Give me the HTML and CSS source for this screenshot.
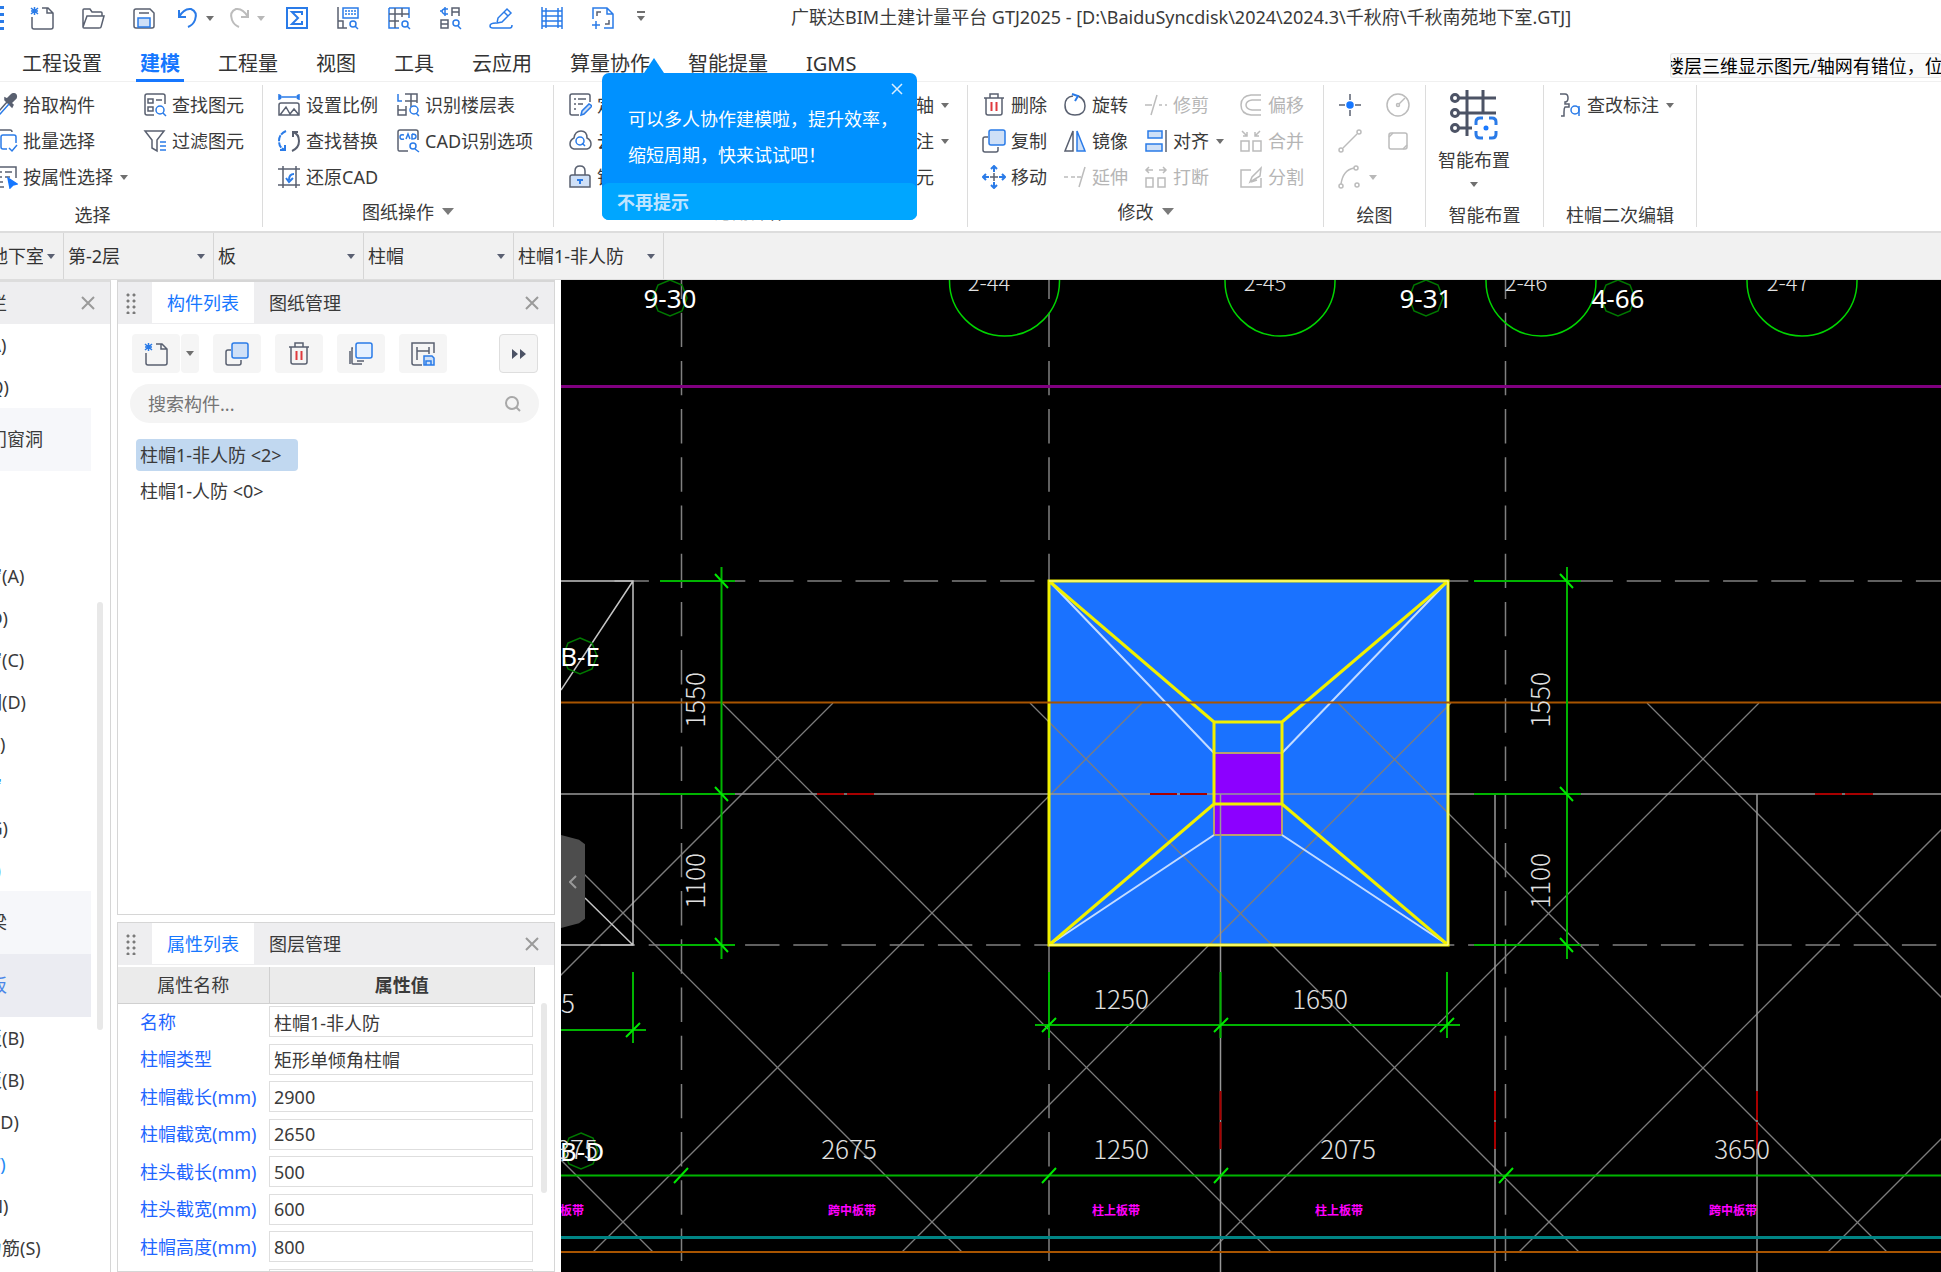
FILE: index.html
```html
<!DOCTYPE html>
<html lang="zh-CN">
<head>
    <meta charset="UTF-8">
    <meta name="viewport" content="width=device-width, initial-scale=1.0">
    <title>广联达BIM土建计量平台 GTJ2025</title>
    <link rel="stylesheet" href="styles.css">
</head>
<body>
    <header class="titlebar">
        <div class="quick-bar">
            <span class="quick-grip"></span>
            <button class="quick" aria-label="新建"><svg class="icon"><path d="M12 2h6l5 5v14a2 2 0 0 1-2 2H4a2 2 0 0 1-2-2V11M17 2v5h6"/><path class="b" d="M1 2l7 6M8 2L1 8M4.500 1v8M1 5h7"/></svg></button>
            <button class="quick" aria-label="打开"><svg class="icon"><path d="M2 21V4q0-1 1-1h6l2 3h9q1 0 1 1v3M2 21L6 10h17l-3 11q0 1-2 1H3q-1 0-1-1z"/></svg></button>
            <button class="quick" aria-label="保存"><svg class="icon"><path d="M4 3h14l4 4v13q0 2-2 2H4q-2 0-2-2V5q0-2 2-2zM7 7h10"/><path class="b light" d="M6 21v-9h12v9z"/></svg></button>
            <button class="quick" aria-label="撤销"><svg class="icon"><path class="b thick" d="M3 4v7h7M3 11Q8 2 15 3q7 3 4 11-2 5-7 7"/></svg><i class="caret"></i></button>
            <button class="quick off" aria-label="恢复"><svg class="icon"><path class="thick" d="M21 4v7h-7M21 11Q16 2 9 3 2 6 5 14q2 5 7 7"/></svg><i class="caret"></i></button>
            <button class="quick" aria-label="汇总"><svg class="icon"><path class="b thick" d="M2 2h20v20H2zM17 9V6H7l6 6-6 6h10v-3"/></svg></button>
            <button class="quick" aria-label="查看工程量"><svg class="icon"><path d="M2 1v21h9M2 15h5v7"/><path class="b" d="M7 2h15v10H7z"/><path class="b" stroke-dasharray="2 1" d="M9 5h11M9 8h11"/><circle class="b" cx="17" cy="18" r="3"/><path class="b" d="M19 20l3 3"/></svg></button>
            <button class="quick" aria-label="查看报表"><svg class="icon"><path class="b" d="M2 2h20v10M2 2v20h10"/><path d="M2 8h20M2 15h10M8 2v20M15 2v9"/><circle class="b" cx="18" cy="18" r="3"/><path class="b" d="M20 20l3 3"/></svg></button>
            <button class="quick" aria-label="查看构件"><svg class="icon"><path d="M14 10V2h7v8M14 6h7M3 14h7v8H3zM3 18h7"/><path class="b" d="M10 3H6q-4 2 0 5h4M7 1v9M2 5h2"/><circle class="b" cx="18" cy="17" r="3"/><path class="b" d="M20 20l3 3"/></svg></button>
            <button class="quick" aria-label="编辑"><svg class="icon"><path class="b" d="M8 17l1-5 9-9 4 4-9 9zM15 6l4 4M7 17q-6 0-6 3 0 2 3 2h17q2 0 2-3"/></svg></button>
            <button class="quick" aria-label="楼层"><svg class="icon"><path class="b" d="M2 1v22M22 1v22M6 2v20M18 2v20M2 5h20M2 10h20M2 15h20M2 20h20"/></svg></button>
            <button class="quick" aria-label="框选"><svg class="icon"><path class="b" d="M2 13V2h14l6 6v14h-9M16 2v6h6M5 15v8M1 19h8"/><path d="M6 10V6h4M14 18h4v-4"/></svg></button>
            <button class="quick-more" aria-label="更多"><i class="caret"></i></button>
        </div>
        <h1 class="title">广联达BIM土建计量平台 GTJ2025 - [D:\BaiduSyncdisk\2024\2024.3\千秋府\千秋南苑地下室.GTJ]</h1>
    </header>

    <nav class="menu">
        <a class="menu-item" href="#">工程设置</a>
        <a class="menu-item active" href="#">建模</a>
        <a class="menu-item" href="#">工程量</a>
        <a class="menu-item" href="#">视图</a>
        <a class="menu-item" href="#">工具</a>
        <a class="menu-item" href="#">云应用</a>
        <div class="menu-anchor">
            <a class="menu-item" href="#">算量协作</a>
            <div class="tip">
                <button class="tip-close" aria-label="关闭"><svg class="cross"><path d="M1 1l10 10M11 1L1 11"/></svg></button>
                <p class="tip-text">可以多人协作建模啦，提升效率，<br>缩短周期，快来试试吧！</p>
                <button class="tip-never">不再提示</button>
            </div>
        </div>
        <a class="menu-item" href="#">智能提量</a>
        <a class="menu-item" href="#">IGMS</a>
        <div class="notice"><span>楼层三维显示图元/轴网有错位，位置</span></div>
    </nav>

    <section class="ribbon">
        <div class="group group-select">
            <div class="tools">
                <button class="tool"><svg class="icon"><path class="solid" d="M11 7l7 7 1-2-2-2 5-5q1-3-1-4-2-1-4 1l-4 4-2-1z"/><path d="M13 9l-8 9"/><path class="b" d="M15 11l-9 10-4 1 1-4"/></svg>拾取构件</button>
                <button class="tool"><svg class="icon"><path d="M11 22H4q-2 0-2-2V3q0-2 2-2h16q2 0 2 2v8M5 6h5v4H5zM13 7h6M5 14h5v4H5z"/><circle class="b" cx="17" cy="17" r="4"/><path class="b" d="M20 20l3 3"/></svg>查找图元</button>
                <button class="tool"><svg class="icon"><path d="M2 15V3q0-2 2-2h12q2 0 2 2"/><path class="b" d="M13 20H9q-2 0-2-2V8q0-2 2-2h11q2 0 2 2v6M15 19l3 3 5-6"/></svg>批量选择</button>
                <button class="tool"><svg class="icon"><path d="M2 2h19l-7 9v11l-5-3v-8z"/><path class="b" d="M17 13h6M17 17h6M17 21h6"/></svg>过滤图元</button>
                <button class="tool"><svg class="icon"><path d="M10 22H2V2h20v11M6 7h2M11 7h7M6 12h2M11 12h5M6 17h3"/><path class="bsolid" d="M14 13l9 6-4 1-3 3z"/></svg>按属性选择<i class="caret"></i></button>
            </div>
            <div class="group-label">选择</div>
        </div>

        <div class="group group-drawing">
            <div class="tools">
                <button class="tool"><svg class="icon"><path class="b" d="M2 1v6M22 1v6M2 4h20M4 2L2 4l2 2M20 2l2 2-2 2"/><path d="M4 10h16q2 0 2 2v10H2V12q0-2 2-2zM3 22l6-8 4 7 4-5 5 6"/></svg>设置比例</button>
                <button class="tool"><svg class="icon"><path class="b" d="M2 1v7h4"/><path d="M9 1h12v9M9 8h12M15 1v13M2 12v10h8v-9M2 17h8"/><circle class="b" cx="18" cy="17" r="4"/><path class="b" d="M20 20l3 3"/></svg>识别楼层表</button>
                <button class="tool"><svg class="icon"><path class="b thick" d="M9 2Q2 5 2 12t6 9M8 16v5H3" stroke-dasharray="6 1"/><path class="thick" d="M15 22q7-3 7-10t-6-9M16 8V3h5"/></svg>查找替换</button>
                <button class="tool"><svg class="icon"><path d="M12 22H3q-1 0-1-2V3q0-2 2-2h16q2 0 2 2v8"/><path class="b" d="M8 6q-4-1-4 2t4 2M10 10l2-5 2 5M16 5v5q4 0 4-2.500T16 5"/><circle class="b" cx="17" cy="17" r="3"/><path class="b" d="M19 20l4 3"/></svg>CAD识别选项</button>
                <button class="tool"><svg class="icon"><path d="M6 1v22M1 4h22M19 1v22M1 20h22"/><path class="b thick" d="M17 9q-5 0-5 6M9 13l3 4 4-4"/></svg>还原CAD</button>
            </div>
            <div class="group-label has-menu">图纸操作<i class="caret large"></i></div>
        </div>

        <div class="group group-common">
            <div class="tools">
                <button class="tool"><svg class="icon"><path d="M11 22H4q-2 0-2-2V3q0-2 2-2h16q2 0 2 2v6M6 6h2M10 6h8M6 11h2M10 11h5M6 16h2"/><path class="b light" d="M13 22l1-4 7-7 3 2-8 8z"/></svg>定义</button>
                <button class="tool"><i class="icon"></i>辅轴<i class="caret"></i></button>
                <button class="tool"><svg class="icon"><path d="M6 20q-4-1-4-5t4-6q1-7 7-7t6 7q4 2 4 6t-4 5z"/><circle class="b" cx="12" cy="12" r="4"/><path class="b" d="M14 14l3 3"/></svg>云检查</button>
                <button class="tool"><i class="icon"></i>标注<i class="caret"></i></button>
                <button class="tool"><svg class="icon"><path d="M7 10V6q0-5 5-5t5 5v4"/><path class="light" d="M4 10h16q2 0 2 2v10H2V12q0-2 2-2z"/><path class="b thick" d="M12 19v-5M9 15h6"/></svg>锁定</button>
                <button class="tool"><i class="icon"></i>图元</button>
            </div>
            <div class="group-label has-menu">通用操作<i class="caret large"></i></div>
        </div>

        <div class="group group-modify">
            <div class="tools">
                <button class="tool"><svg class="icon"><path d="M2 5h20M8 5V1h8v4M4 5v15q0 2 2 2h12q2 0 2-2V5"/><path class="r" d="M9.500 9v9M14.500 9v9"/></svg>删除</button>
                <button class="tool"><svg class="icon"><path d="M15 3q7 3 7 10 0 9-10 9T2 12Q2 4 10 3"/><path class="b thick" d="M9 1l6 2-3 5"/></svg>旋转</button>
                <button class="tool off"><svg class="icon"><path d="M1 12h7M7 22l6-20M15 12h3M21 12h2"/></svg>修剪</button>
                <button class="tool off"><svg class="icon"><path d="M22 2H12Q2 3 2 12t10 10h10M22 7H13q-6 1-6 5t6 5h9"/></svg>偏移</button>
                <button class="tool"><svg class="icon"><path d="M6 8H3q-2 0-2 2v11q0 2 2 2h11q2 0 2-2v-3"/><rect class="b light" x="7" y="1" width="16" height="15" rx="2"/></svg>复制</button>
                <button class="tool"><svg class="icon"><path d="M10 2v20H2z"/><path class="b light" d="M14 2v20h8z"/></svg>镜像</button>
                <button class="tool"><svg class="icon"><path class="b light" d="M4 2h14v7H4zM2 15h16v7H2z"/><path d="M22 1v22"/></svg>对齐<i class="caret"></i></button>
                <button class="tool off"><svg class="icon"><path d="M2 12h8v10H2zM14 12h8v10h-8zM3 2l5 5M8 3v4H4M21 2l-5 5M16 3v4h4"/></svg>合并</button>
                <button class="tool"><svg class="icon"><path class="b thick" d="M12 1v6M12 17v6M1 12h6M17 12h6M9 4l3-3 3 3M9 20l3 3 3-3M4 9l-3 3 3 3M20 9l3 3-3 3"/><path d="M12 8v8M8 12h8"/></svg>移动</button>
                <button class="tool off"><svg class="icon"><path d="M1 12h4M8 12h4M16 22l6-20M14 12h4"/></svg>延伸</button>
                <button class="tool off"><svg class="icon"><path d="M2 13h7v9H2zM14 13h7v9h-7zM2 5h7M5 2L2 5l3 3M22 5h-7M19 2l3 3-3 3"/></svg>打断</button>
                <button class="tool off"><svg class="icon"><path d="M12 5H2v17h20v-9M11 17l2-5 9-9-1 8zM12 17l6-2"/></svg>分割</button>
            </div>
            <div class="group-label has-menu">修改<i class="caret large"></i></div>
        </div>

        <div class="group group-draw">
            <div class="tools">
                <button class="tool" aria-label="点"><svg class="icon"><path d="M12 1v6M12 17v6M1 12h6M17 12h6"/><circle class="bsolid" cx="12" cy="12" r="3"/></svg></button>
                <button class="tool off" aria-label="圆"><svg class="icon"><circle cx="12" cy="12" r="11"/><circle cx="12" cy="12" r="1.500"/><path d="M13 11l6-6"/></svg></button>
                <button class="tool off" aria-label="直线"><svg class="icon"><circle cx="3" cy="21" r="2"/><circle cx="21" cy="3" r="2"/><path d="M5 19L19 5"/></svg></button>
                <button class="tool off" aria-label="矩形"><svg class="icon"><rect x="3" y="4" width="18" height="16" rx="2"/><path d="M3 8l4-4M17 20l4-4"/></svg></button>
                <button class="tool off" aria-label="弧线"><svg class="icon"><circle cx="3" cy="21" r="2"/><circle cx="18" cy="3" r="2"/><circle cx="19" cy="20" r="2"/><path d="M3 19Q5 5 16 3"/></svg><i class="caret"></i></button>
            </div>
            <div class="group-label">绘图</div>
        </div>

        <div class="group group-smart">
            <button class="big-tool">
                <svg class="icon-big"><path d="M17 0v46M33 0v22M8 8h38M8 23h38M8 38h14"/><circle cx="5" cy="8" r="3.500"/><circle cx="5" cy="23" r="3.500"/><circle cx="5" cy="38" r="3.500"/><path class="b" d="M26 35v-3q0-4 4-4h3M39 28h3q4 0 4 4v3M46 41v3q0 4-4 4h-3M33 48h-3q-4 0-4-4v-3"/><circle class="bsolid" cx="36" cy="38" r="1"/></svg>
                <span>智能布置</span>
                <i class="caret"></i>
            </button>
            <div class="group-label">智能布置</div>
        </div>

        <div class="group group-edit">
            <div class="tools">
                <button class="tool"><svg class="icon"><path d="M2 1h5q3 0 3 4t-3 4v2h4v3H7q-1 1-1 5v4H3"/><circle class="b" cx="17" cy="17" r="4"/><path class="b" d="M21 13v10"/></svg>查改标注<i class="caret"></i></button>
            </div>
            <div class="group-label">柱帽二次编辑</div>
        </div>
    </section>

    <section class="context-bar">
        <div class="combo combo-first"><select aria-label="单项工程"><option>千秋南苑地下室</option></select></div>
        <div class="combo"><select aria-label="楼层"><option>第-2层</option></select></div>
        <div class="combo"><select aria-label="构件类别"><option>板</option></select></div>
        <div class="combo"><select aria-label="构件类型"><option>柱帽</option></select></div>
        <div class="combo"><select aria-label="构件"><option>柱帽1-非人防</option></select></div>
    </section>

    <main class="workspace">
        <aside class="nav-panel">
            <div class="nav-head">导航栏<button class="close" aria-label="关闭"><svg class="cross"><path d="M0 0l12 12M12 0L0 12"/></svg></button></div>
            <ul class="nav-list">
                <li>暗梁(A)</li>
                <li>幕墙(Q)</li>
                <li class="nav-group">门窗洞</li>
                <li>门(M)</li>
                <li>窗(C)</li>
                <li>门联窗(A)</li>
                <li>墙洞(D)</li>
                <li>带形窗(C)</li>
                <li>带形洞(D)</li>
                <li>飘窗(X)</li>
                <li class="current">老虎窗</li>
                <li>过梁(G)</li>
                <li class="current">壁龛(I)</li>
                <li class="nav-group">梁</li>
                <li class="nav-group open">板</li>
                <li>现浇板(B)</li>
                <li>螺旋板(B)</li>
                <li>坡道(PD)</li>
                <li class="current">柱帽(V)</li>
                <li>板洞(N)</li>
                <li>板受力筋(S)</li>
            </ul>
            <span class="scroll nav-scroll"></span>
        </aside>

        <div class="side">
            <section class="panel list-panel">
                <div class="panel-head">
                    <span class="grip"></span>
                    <button class="tab active">构件列表</button>
                    <button class="tab">图纸管理</button>
                    <button class="close" aria-label="关闭"><svg class="cross"><path d="M0 0l12 12M12 0L0 12"/></svg></button>
                </div>
                <div class="panel-tools">
                    <div class="split">
                        <button class="ptool" aria-label="新建"><svg class="icon"><path d="M12 2h6l5 5v14a2 2 0 0 1-2 2H4a2 2 0 0 1-2-2V11M17 2v5h6"/><path class="b" d="M1 2l7 6M8 2L1 8M4.500 1v8M1 5h7"/></svg></button>
                        <button class="ptool narrow" aria-label="新建选项"><i class="caret"></i></button>
                    </div>
                    <button class="ptool" aria-label="复制"><svg class="icon"><path d="M6 8H3q-2 0-2 2v11q0 2 2 2h11q2 0 2-2v-3"/><rect class="b light" x="7" y="1" width="16" height="15" rx="2"/></svg></button>
                    <button class="ptool" aria-label="删除"><svg class="icon"><path d="M2 5h20M8 5V1h8v4M4 5v15q0 2 2 2h12q2 0 2-2V5"/><path class="r" d="M9.500 9v9M14.500 9v9"/></svg></button>
                    <button class="ptool" aria-label="层间复制"><svg class="icon"><path d="M4 6H3v15q0 1 1 1h9M1 9v13M8 19h7"/><rect class="b pale" x="7" y="1" width="16" height="15" rx="2"/></svg></button>
                    <button class="ptool" aria-label="存档"><svg class="icon"><path d="M11 23H3q-2 0-2-2V1h22v10M6 5v13M6 9h12M18 5v7"/><path class="b light" d="M13 14h8l2 2v7H13zM15 19h5v4h-5z"/></svg></button>
                    <button class="ptool more" aria-label="更多"><svg class="ff"><path d="M0 0l6 5-6 5zM8 0l6 5-6 5z"/></svg></button>
                </div>
                <label class="search">
                    <input type="text" placeholder="搜索构件..." aria-label="搜索构件">
                    <svg class="search-icon"><circle cx="7" cy="7" r="6"/><path d="M11 11l4 4"/></svg>
                </label>
                <ul class="members">
                    <li><span class="member selected">柱帽1-非人防 &lt;2&gt;</span></li>
                    <li><span class="member">柱帽1-人防 &lt;0&gt;</span></li>
                </ul>
            </section>

            <section class="panel prop-panel">
                <div class="panel-head">
                    <span class="grip"></span>
                    <button class="tab active">属性列表</button>
                    <button class="tab">图层管理</button>
                    <button class="close" aria-label="关闭"><svg class="cross"><path d="M0 0l12 12M12 0L0 12"/></svg></button>
                </div>
                <table class="props">
                    <thead>
                        <tr><th class="prop-name" scope="col">属性名称</th><th class="prop-value" scope="col">属性值</th></tr>
                    </thead>
                    <tbody>
                        <tr><td><label for="p-name">名称</label></td><td><input id="p-name" type="text" value="柱帽1-非人防"></td></tr>
                        <tr><td><label for="p-type">柱帽类型</label></td><td><input id="p-type" type="text" value="矩形单倾角柱帽"></td></tr>
                        <tr><td><label for="p-cl">柱帽截长(mm)</label></td><td><input id="p-cl" type="text" value="2900"></td></tr>
                        <tr><td><label for="p-cw">柱帽截宽(mm)</label></td><td><input id="p-cw" type="text" value="2650"></td></tr>
                        <tr><td><label for="p-hl">柱头截长(mm)</label></td><td><input id="p-hl" type="text" value="500"></td></tr>
                        <tr><td><label for="p-hw">柱头截宽(mm)</label></td><td><input id="p-hw" type="text" value="600"></td></tr>
                        <tr><td><label for="p-h">柱帽高度(mm)</label></td><td><input id="p-h" type="text" value="800"></td></tr>
                        <tr><td><label for="p-mat">材质</label></td><td><input id="p-mat" type="text" value="现浇混凝土"></td></tr>
                    </tbody>
                </table>
                <span class="scroll prop-scroll"></span>
            </section>
        </div>

        <div class="canvas">
            <svg class="plan" viewBox="561 280 1380 992" preserveAspectRatio="xMinYMin slice">
                <!-- column cap -->
                <rect x="1049" y="581" width="399" height="364" fill="#1a72ff"/>
                <rect x="1214" y="753" width="68" height="82" fill="#8c00ff" stroke="#b8a070" stroke-width="2"/>

                <!-- slab band hatching -->
                <g class="hatch">
                    <path d="M104 703l549 549M413 703l549 549M722 703l549 549M1030 703l549 549M1338 703l549 549M1647 703l549 549"/>
                    <path d="M833 703l-549 549M1142 703l-549 549M1451 703l-549 549M1759 703l-549 549M2068 703l-549 549M2377 703l-549 549"/>
                </g>

                <!-- axis grid -->
                <g class="axis">
                    <path d="M681.500 264.500V1261M1049 264.500V1261M1505.500 264.500V1261"/>
                    <path d="M614.500 581H1941M600.500 945H1941"/>
                </g>
                <path class="wall" d="M561 794H1941M1220.500 794V1272M1495 794V1272M1757 794V1272"/>
                <path class="mark" d="M817 794h27M847 794h27M1150 794h27M1180 794h27M1815 794h27M1845 794h28M1220.500 1091v29M1220.500 1122v27M1495 1091v29M1495 1122v27M1757 1091v29M1757 1122v27"/>
                <path class="edge" d="M561 581H633V945H561M633 581L561 690M633 945L585 898"/>

                <!-- column cap edges -->
                <g class="cap">
                    <path class="cap-white" d="M1049 581L1214 753M1448 581L1282 753M1049 945L1214 835M1448 945L1282 835"/>
                    <path d="M1049 581H1448V945H1049zM1214 722H1282V804H1214zM1049 581L1214 722M1448 581L1282 722M1049 945L1214 804M1448 945L1282 804"/>
                    <path class="cap-rim" d="M1049 581H1448V945H1049"/>
                </g>

                <path stroke="#800080" stroke-width="3" d="M561 386.500H1941"/>
                <path stroke="#a85400" stroke-width="2" d="M561 702.500H1941M561 1252H1941"/>
                <path stroke="#008484" stroke-width="3" d="M561 1237.500H1941"/>

                <!-- dimension lines -->
                <g class="dim">
                    <path d="M721.500 567V959M660 581H735M660 794H735M660 945H735"/>
                    <path d="M1567 567V959M1474 581H1581M1474 794H1581M1474 945H1581"/>
                    <path d="M1035 1025H1460M1049 972V1038M1220.500 972V1038M1447 972V1038M561 1030H646M633 972V1043"/>
                    <path d="M561 1175.500H1941"/>
                </g>
                <g class="tick">
                    <path d="M715 574l13 14M715 787l13 14M715 938l13 14M1560 574l13 14M1560 787l13 14M1560 938l13 14"/>
                    <path d="M1042 1032l14-14M1214 1032l14-14M1440 1032l14-14M626 1037l14-14M674 1183l14-15M1042 1183l14-15M1214 1183l14-15M1499 1183l14-15"/>
                </g>

                <!-- axis bubbles -->
                <g class="bubble">
                    <circle cx="1004.500" cy="281" r="55"/>
                    <circle cx="1280" cy="281" r="55"/>
                    <circle cx="1541" cy="281" r="55"/>
                    <circle cx="1802" cy="281" r="55"/>
                </g>
                <g class="bubble-dark">
                    <path d="M670 280l12 5 5 13-5 13-12 5-12-5-5-13 5-13z"/>
                    <path d="M1426 280l12 5 5 13-5 13-12 5-12-5-5-13 5-13z"/>
                    <path d="M1618 280l12 5 5 13-5 13-12 5-12-5-5-13 5-13z"/>
                    <path d="M580 638l12 5 5 13-5 13-12 5-12-5-5-13 5-13z"/>
                    <path d="M581 1133l12 5 5 13-5 13-12 5-12-5-5-13 5-13z"/>
                </g>
                <g class="axis-name">
                    <text x="670" y="308">9-30</text>
                    <text x="1426" y="308">9-31</text>
                    <text x="1618" y="308">4-66</text>
                    <text x="580" y="666">B-E</text>
                    <text x="582" y="1161">B-D</text>
                </g>
                <g class="dim-text bubble-text">
                    <text x="989" y="291">2-44</text>
                    <text x="1265" y="291">2-45</text>
                    <text x="1526" y="291">2-46</text>
                    <text x="1788" y="291">2-47</text>
                </g>
                <g class="dim-text">
                    <text x="1121" y="1009">1250</text>
                    <text x="1320" y="1009">1650</text>
                    <text x="568" y="1013">5</text>
                    <text x="577" y="1159">375</text>
                    <text x="849" y="1159">2675</text>
                    <text x="1121" y="1159">1250</text>
                    <text x="1348" y="1159">2075</text>
                    <text x="1742" y="1159">3650</text>
                    <text transform="translate(705 700) rotate(-90)">1550</text>
                    <text transform="translate(705 881) rotate(-90)">1100</text>
                    <text transform="translate(1550 700) rotate(-90)">1550</text>
                    <text transform="translate(1550 881) rotate(-90)">1100</text>
                </g>
                <g class="band-name">
                    <text x="560" y="1215">柱上板带</text>
                    <text x="852" y="1215">跨中板带</text>
                    <text x="1116" y="1215">柱上板带</text>
                    <text x="1339" y="1215">柱上板带</text>
                    <text x="1733" y="1215">跨中板带</text>
                </g>
            </svg>
            <button class="handle" aria-label="收起"><svg class="chevron"><path d="M7 1L1 7l6 6"/></svg></button>
        </div>
    </main>
</body>
</html>
```
FILE: styles.css
```css
* {
    box-sizing: border-box;
}

body {
    margin: 0;
    height: 100vh;
    display: flex;
    flex-direction: column;
    overflow: hidden;
    background: #ffffff;
    color: #3a3a3a;
    font-family: "Noto Sans", "Noto Sans CJK SC", sans-serif;
    font-size: 18px;
    line-height: 24px;
}

button,
input,
select {
    font: inherit;
    color: inherit;
    border: none;
    background: none;
    padding: 0;
    margin: 0;
}

ul {
    list-style: none;
    margin: 0;
    padding: 0;
}

/* Icons */
.icon {
    width: 24px;
    height: 24px;
    flex: none;
    fill: none;
    stroke: #596070;
    stroke-width: 1.5;
}

.icon .b,
.icon-big .b {
    stroke: #2a7be8;
}

.icon .r {
    stroke: #e03a3e;
    stroke-width: 2;
}

.icon .thick {
    stroke-width: 2;
}

.icon .light {
    fill: #cfe0f7;
}

.icon .pale {
    fill: #e6f1ff;
}

.icon .solid {
    fill: #596070;
}

.bsolid {
    fill: #1677ff;
    stroke: #1677ff;
}

.off .icon {
    stroke: #bcbcbc;
}

.caret {
    flex: none;
    border: 4px solid transparent;
    border-top: 5px solid #6f6f6f;
    border-bottom: 0;
}

.caret.large {
    border-width: 6px;
    border-top-width: 7px;
    border-bottom: 0;
    border-top-color: #7a7a7a;
}

.off .caret {
    border-top-color: #b8b8b8;
}

.cross {
    width: 12px;
    height: 12px;
    display: block;
    overflow: visible;
    fill: none;
    stroke: #9a9a9a;
    stroke-width: 2;
}

/* Title bar */
.titlebar {
    display: flex;
    align-items: center;
    height: 36px;
    flex: none;
}

.quick-bar {
    display: flex;
    align-items: center;
    width: 791px;
    flex: none;
}

.quick-grip {
    width: 4px;
    height: 24px;
    margin-right: 12px;
    background: repeating-linear-gradient(#2a7be8 0 3px, #ffffff 3px 7px);
}

.quick {
    width: 51px;
    height: 36px;
    display: flex;
    align-items: center;
    justify-content: center;
    gap: 6px;
}

.quick-more {
    width: 26px;
    display: flex;
    justify-content: center;
}

.quick-more .caret {
    box-shadow: 0 -3px 0 #ffffff, 0 -5px 0 #6f6f6f;
}

.title {
    margin: 0;
    font-size: 18px;
    font-weight: 400;
    line-height: 34px;
    height: 36px;
    white-space: nowrap;
}

/* Menu */
.menu {
    display: flex;
    flex: none;
    height: 46px;
    padding-left: 22px;
    gap: 38px;
    align-items: flex-end;
    border-bottom: 1px solid #f0f0f0;
}

.menu-item {
    position: relative;
    display: block;
    height: 45px;
    padding-top: 10px;
    font-size: 20px;
    line-height: 36px;
    color: #333333;
    text-decoration: none;
    white-space: nowrap;
}

.menu-item.active {
    color: #1677ff;
    font-weight: 700;
}

.menu-item.active::after {
    content: "";
    position: absolute;
    left: -4px;
    right: -4px;
    bottom: -1px;
    height: 3px;
    background: #1677ff;
}

.menu-anchor {
    position: relative;
}

.notice {
    flex: 1;
    min-width: 0;
    max-width: 271px;
    height: 25px;
    margin: 0 0 3px auto;
    border: 1px solid #e8e8e8;
    border-right: none;
    border-radius: 3px;
    background: #fafafa;
    color: #000000;
    line-height: 24px;
    white-space: nowrap;
    overflow: hidden;
}

.notice span {
    margin-left: -5px;
}

/* Collaboration tip */
.tip {
    position: absolute;
    z-index: 10;
    top: 37px;
    left: 32px;
    width: 315px;
    height: 147px;
    display: flex;
    flex-direction: column;
    border-radius: 7px;
    background: #0091ff;
    color: #ffffff;
}

.tip::before {
    content: "";
    position: absolute;
    left: 42px;
    top: -15px;
    border: 10px solid transparent;
    border-top: 0;
    border-bottom: 15px solid #0091ff;
}

.tip-close {
    position: absolute;
    top: 10px;
    right: 14px;
}

.tip-close .cross {
    stroke: #d8eeff;
    stroke-width: 1.5;
}

.tip-text {
    flex: 1;
    margin: 0;
    padding: 28px 0 0 26px;
    line-height: 36px;
    white-space: nowrap;
}

.tip-never {
    height: 37px;
    padding-left: 15px;
    border-radius: 7px;
    background: #00a6ff;
    color: #bfe4ff;
    font-weight: 700;
    text-align: left;
}

/* Ribbon */
.ribbon {
    display: flex;
    flex: none;
    height: 151px;
    padding: 3px 0;
    border-bottom: 2px solid #dddddd;
    overflow: hidden;
}

.group {
    flex: none;
    display: flex;
    flex-direction: column;
    height: 142px;
    padding-left: 14px;
    border-right: 1px solid #dcdcdc;
}

.group-select {
    width: 340px;
    margin-left: -77px;
    padding-left: 71px;
}

.group-drawing {
    width: 291px;
}

.group-common {
    width: 414px;
}

.group-modify {
    width: 356px;
}

.group-draw {
    width: 102px;
}

.group-smart {
    width: 118px;
}

.group-edit {
    width: 153px;
}

.tools {
    display: grid;
    grid-auto-rows: 36px;
    align-items: center;
    justify-content: start;
    height: 111px;
    padding-top: 2px;
}

.group-select .tools {
    grid-template-columns: 149px auto;
}

.group-drawing .tools {
    grid-template-columns: 119px auto;
}

.group-common .tools {
    grid-template-columns: 301px auto;
}

.group-modify .tools {
    grid-template-columns: 81px 81px 95px auto;
}

.group-draw .tools {
    grid-template-columns: 48px auto;
}

.tool {
    display: flex;
    align-items: center;
    gap: 5px;
    white-space: nowrap;
}

.tool .caret {
    margin-left: 2px;
}

.tool.off {
    color: #b5b5b5;
}

.group-label {
    display: flex;
    align-items: center;
    justify-content: center;
    gap: 8px;
    height: 30px;
    margin-left: -14px;
    padding-top: 7px;
}

.group-label.has-menu {
    padding-top: 1px;
}

.group-select .group-label {
    margin-left: -71px;
}

.big-tool {
    width: 72px;
    height: 111px;
    padding-top: 5px;
    margin-left: -2px;
    display: flex;
    flex-direction: column;
    align-items: center;
    white-space: nowrap;
}

.big-tool span {
    padding: 8px 0 10px;
}

.icon-big {
    width: 48px;
    height: 50px;
    flex: none;
    fill: none;
    stroke: #4c5365;
    stroke-width: 3;
}

/* Context selectors */
.context-bar {
    display: flex;
    flex: none;
    height: 47px;
    background: #f1f1f1;
    border-bottom: 1px solid #dddddd;
    overflow: hidden;
}

.combo {
    position: relative;
    flex: none;
    width: 150px;
    border-right: 1px solid #d6d6d6;
}

.combo-first {
    margin-left: -86px;
}

.combo select {
    appearance: none;
    width: 100%;
    height: 100%;
    padding: 0 20px 0 4px;
    color: #333333;
}

.combo::after {
    content: "";
    position: absolute;
    right: 8px;
    top: 21px;
    border: 4px solid transparent;
    border-top: 5px solid #5a6072;
    border-bottom: 0;
    pointer-events: none;
}

/* Workspace */
.workspace {
    flex: 1;
    min-height: 0;
    display: flex;
}

.scroll {
    position: absolute;
    width: 6px;
    border-radius: 3px;
    background: #e8e8e8;
}

.close {
    margin-left: auto;
    padding: 4px;
}

.nav-panel {
    position: relative;
    flex: none;
    width: 201px;
    margin-left: -90px;
    border-top: 2px solid #dddddd;
    border-right: 1px solid #d6d6d6;
    overflow: hidden;
}

.nav-head {
    display: flex;
    align-items: center;
    height: 42px;
    padding: 0 12px 0 43px;
    background: #eeeef0;
}

.nav-list li {
    height: 42px;
    padding-left: 38px;
    line-height: 42px;
    white-space: nowrap;
}

.nav-list .nav-group {
    height: 63px;
    margin-right: 19px;
    padding-left: 79px;
    line-height: 63px;
    background: #f6f7fa;
}

.nav-list .nav-group.open {
    background: #ebecf2;
    color: #4a86e8;
}

.nav-list .current {
    color: #2489f5;
}

.nav-scroll {
    right: 7px;
    top: 320px;
    height: 428px;
}

.side {
    flex: none;
    width: 438px;
    margin: 0 6px;
    display: flex;
    flex-direction: column;
    gap: 7px;
}

.panel {
    position: relative;
    border: 1px solid #d6d6d6;
}

.list-panel {
    flex: none;
    height: 635px;
    border-top-width: 2px;
}

.prop-panel {
    flex: 1;
    min-height: 0;
    overflow: hidden;
}

.panel-head {
    display: flex;
    align-items: center;
    height: 42px;
    padding-right: 12px;
    background: #eeeef0;
}

.grip {
    width: 11px;
    height: 22px;
    margin: 0 16px 0 7px;
    background: radial-gradient(circle, #7a7a7a 1px, transparent 2px) 0 0 / 6px 6px;
}

.tab {
    height: 100%;
    padding: 0 15px;
    border-bottom: 1px solid #eeeef0;
}

.tab.active {
    background: #ffffff;
    color: #1677ff;
}

.panel-tools {
    display: flex;
    gap: 14px;
    padding: 10px 16px 11px 14px;
}

.split {
    display: flex;
    gap: 1px;
}

.ptool {
    width: 48px;
    height: 39px;
    display: flex;
    align-items: center;
    justify-content: center;
    border-radius: 4px;
    background: #f5f5f5;
}

.ptool.narrow {
    width: 18px;
}

.ptool.more {
    width: 39px;
    margin-left: auto;
    border: 1px solid #dedede;
}

.ff {
    width: 14px;
    height: 10px;
    fill: #4c5365;
}

.search {
    display: flex;
    align-items: center;
    height: 39px;
    margin: 0 15px 0 12px;
    padding: 0 18px;
    border-radius: 20px;
    background: #f4f4f4;
}

.search input {
    flex: 1;
    min-width: 0;
    outline: none;
}

.search input::placeholder {
    color: #757575;
}

.search-icon {
    width: 16px;
    height: 16px;
    fill: none;
    stroke: #a8a8a8;
    stroke-width: 2;
}

.members {
    padding: 16px 0 0 18px;
}

.members li {
    height: 36px;
}

.member {
    display: inline-block;
    padding: 4px 16px 4px 4px;
    border-radius: 4px;
}

.member.selected {
    background: #c1d8f0;
}

/* Property table */
.props {
    width: 417px;
    margin-top: 2px;
    border-collapse: collapse;
    table-layout: fixed;
}

.props th {
    height: 36px;
    padding: 0;
    background: #ebebeb;
    border-right: 1px solid #d0d0d0;
    border-bottom: 1px solid #d0d0d0;
    font-weight: 700;
}

.props .prop-name {
    width: 151px;
    font-weight: 400;
}

.props td {
    height: 37px;
    padding: 0;
}

.props tr:nth-child(even) td {
    height: 38px;
}

.props td:first-child {
    padding-left: 22px;
    color: #1f66ff;
    white-space: nowrap;
}

.props input {
    display: block;
    width: 264px;
    height: 31px;
    padding: 0 4px;
    border: 1px solid #dedede;
}

.prop-scroll {
    right: 7px;
    top: 80px;
    height: 190px;
}

/* Drawing area */
.canvas {
    position: relative;
    flex: 1;
    min-width: 0;
    background: #000000;
    overflow: hidden;
}

.plan {
    display: block;
    width: 100%;
    height: 100%;
    fill: none;
}

.hatch {
    stroke: #7c7c7c;
    stroke-width: 1.3;
}

.axis {
    stroke: #808080;
    stroke-width: 1.5;
    stroke-dasharray: 34.4 13.8;
}

.wall {
    stroke: #989898;
    stroke-width: 1.5;
}

.mark {
    stroke: #a80000;
    stroke-width: 2;
}

.edge {
    stroke: #c4c4c4;
    stroke-width: 1.5;
}

.cap {
    stroke: #f0f000;
    stroke-width: 3;
}

.cap-white {
    stroke: #c4dcff;
    stroke-width: 2;
}

.cap-rim {
    stroke: #ffffc0;
    stroke-width: 1;
}

.dim {
    stroke: #00b400;
    stroke-width: 2;
}

.tick {
    stroke: #00e800;
    stroke-width: 2;
}

.bubble {
    stroke: #00d400;
    stroke-width: 1.5;
}

.bubble-dark {
    stroke: #007800;
    stroke-width: 1.5;
}

.plan text {
    text-anchor: middle;
}

.axis-name {
    fill: #ffffff;
    font-size: 26px;
}

.dim-text {
    fill: #e0e0e0;
    font-family: "Noto Sans CJK SC", sans-serif;
    font-size: 26px;
    font-weight: 300;
}

.bubble-text {
    font-size: 22px;
}

.band-name {
    fill: #ff00ff;
    font-size: 12px;
    font-weight: 700;
}

.handle {
    position: absolute;
    left: 0;
    top: 555px;
    width: 24px;
    height: 93px;
    display: flex;
    align-items: center;
    justify-content: center;
    background: #4d4d4d;
    clip-path: polygon(0 0, 75% 5%, 100% 10%, 100% 90%, 75% 95%, 0 100%);
}

.chevron {
    width: 8px;
    height: 14px;
    fill: none;
    stroke: #9a9a9a;
    stroke-width: 2;
}
```
